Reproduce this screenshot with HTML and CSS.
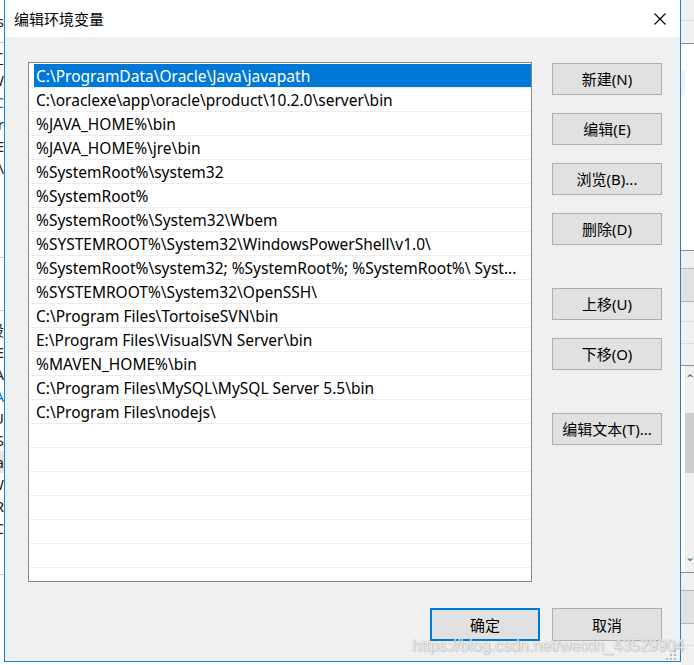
FILE: index.html
```html
<!DOCTYPE html>
<html lang="zh-CN">
<head>
    <meta charset="UTF-8">
    <meta name="viewport" content="width=device-width, initial-scale=1.0">
    <title>编辑环境变量</title>
    <link rel="stylesheet" href="styles.css">
</head>
<body>
    <div class="desktop">
        <!-- window behind, left edge -->
        <div class="bg-left">
            <div class="bl-top"><span class="frag">Settings</span></div>
            <div class="bl-lines">
                <span class="frag">工</span>
                <span class="frag">W</span>
                <span class="frag blue">C</span>
                <span class="frag">r</span>
                <span class="frag">E</span>
                <span class="frag">\</span>
            </div>
            <div class="bl-mid"></div>
            <div class="bl-lines bl-lower">
                <span class="frag">設</span>
                <span class="frag">E</span>
                <span class="frag">A</span>
                <span class="frag blue">A</span>
                <span class="frag">U</span>
                <span class="frag">S</span>
                <span class="frag shade">a</span>
                <span class="frag">W</span>
                <span class="frag">R</span>
                <span class="frag">C</span>
            </div>
        </div>

        <div class="dialog">
            <div class="titlebar">
                <span class="title">编辑环境变量</span>
                <svg class="close" width="12" height="12" viewBox="0 0 12 12">
                    <path d="M0.5 0.5 L11.5 11.5 M11.5 0.5 L0.5 11.5" stroke="#000" stroke-width="1.1" fill="none"/>
                </svg>
            </div>

            <div class="content">
                <div class="main">
                    <div class="list">
                        <div class="row selected"><span class="cell">C:\ProgramData\Oracle\Java\javapath</span></div>
                        <div class="row"><span class="cell">C:\oraclexe\app\oracle\product\10.2.0\server\bin</span></div>
                        <div class="row"><span class="cell">%JAVA_HOME%\bin</span></div>
                        <div class="row"><span class="cell">%JAVA_HOME%\jre\bin</span></div>
                        <div class="row"><span class="cell">%SystemRoot%\system32</span></div>
                        <div class="row"><span class="cell">%SystemRoot%</span></div>
                        <div class="row"><span class="cell">%SystemRoot%\System32\Wbem</span></div>
                        <div class="row"><span class="cell">%SYSTEMROOT%\System32\WindowsPowerShell\v1.0\</span></div>
                        <div class="row"><span class="cell">%SystemRoot%\system32; %SystemRoot%; %SystemRoot%\ Syst...</span></div>
                        <div class="row"><span class="cell">%SYSTEMROOT%\System32\OpenSSH\</span></div>
                        <div class="row"><span class="cell">C:\Program Files\TortoiseSVN\bin</span></div>
                        <div class="row"><span class="cell">E:\Program Files\VisualSVN Server\bin</span></div>
                        <div class="row"><span class="cell">%MAVEN_HOME%\bin</span></div>
                        <div class="row"><span class="cell">C:\Program Files\MySQL\MySQL Server 5.5\bin</span></div>
                        <div class="row"><span class="cell">C:\Program Files\nodejs\</span></div>
                        <div class="row"></div>
                        <div class="row"></div>
                        <div class="row"></div>
                        <div class="row"></div>
                        <div class="row"></div>
                        <div class="row"></div>
                        <div class="row"></div>
                    </div>

                    <div class="side">
                        <button class="btn">新建(N)</button>
                        <button class="btn">编辑(E)</button>
                        <button class="btn">浏览(B)...</button>
                        <button class="btn">删除(D)</button>
                        <button class="btn group">上移(U)</button>
                        <button class="btn">下移(O)</button>
                        <button class="btn group">编辑文本(T)...</button>
                    </div>
                </div>

                <div class="footer">
                    <button class="btn btn-default">确定</button>
                    <button class="btn">取消</button>
                </div>
            </div>

            <svg class="grip" width="10" height="10" viewBox="0 0 10 10">
                <rect x="8" y="0" width="2" height="2" fill="#b8b8b8"/>
                <rect x="4" y="4" width="2" height="2" fill="#b8b8b8"/>
                <rect x="8" y="4" width="2" height="2" fill="#b8b8b8"/>
                <rect x="0" y="8" width="2" height="2" fill="#b8b8b8"/>
                <rect x="4" y="8" width="2" height="2" fill="#b8b8b8"/>
                <rect x="8" y="8" width="2" height="2" fill="#b8b8b8"/>
            </svg>
        </div>

        <!-- window behind, right edge -->
        <div class="bg-right">
            <div class="rs rs-a"></div>
            <div class="rs rs-b"></div>
            <div class="rs rs-c"><div class="rs-patch"></div></div>
            <div class="rs rs-d"></div>
            <div class="rs rs-e"></div>
            <div class="rs rs-f"></div>
            <div class="rs rs-g"></div>
            <div class="rs rs-h"></div>
            <div class="rs rs-scroll">
                <div class="rs-gutter"></div>
                <div class="scrollbar">
                    <span class="arrow">&#8963;</span>
                    <div class="thumb"></div>
                    <span class="arrow down">&#8964;</span>
                </div>
            </div>
            <div class="rs rs-d"></div>
            <div class="rs rs-e"></div>
            <div class="rs rs-end"></div>
        </div>

        <div class="watermark">https://blog.csdn.net/weixin_43529904</div>
    </div>
</body>
</html>
```

FILE: styles.css
```css
body {
    margin: 0;
    padding: 0;
    font-family: "Noto Sans", "Noto Sans CJK SC", sans-serif;
    font-size: 15px;
    color: #000;
    background: #fff;
}

.desktop {
    display: flex;
    width: 694px;
    height: 665px;
    position: relative;
    overflow: hidden;
    background: #fff;
}

/* ---------- background windows ---------- */

.bg-left {
    width: 4px;
    flex-shrink: 0;
    overflow: hidden;
    background: #fff;
}

.bl-top {
    height: 42px;
    border-bottom: 1px solid #c8c8c8;
    display: flex;
    justify-content: flex-end;
    align-items: center;
}

.bl-lines {
    display: flex;
    flex-direction: column;
    align-items: flex-end;
    padding-top: 4px;
    height: 210px;
    border-bottom: 1px solid #c8c8c8;
}

.bl-mid {
    height: 52px;
    border-bottom: 1px solid #c8c8c8;
}

.bl-lower {
    height: 255px;
    padding-top: 8px;
}

.frag {
    display: block;
    line-height: 22px;
    font-size: 15px;
    color: #222;
    white-space: nowrap;
}

.frag.blue {
    color: #0078d7;
}

.frag.shade {
    background: #e5e5e5;
}

.bg-right {
    width: 13px;
    flex-shrink: 0;
    background: #f0f0f0;
}

.rs {
    background: #f0f0f0;
}

.rs-a { height: 20px; border-bottom: 1px solid #dadada; }
.rs-b { height: 22px; border-bottom: 1px solid #8f8f8f; }
.rs-c { height: 207px; box-sizing: border-box; padding-top: 26px; border-bottom: 1px solid #8f8f8f; background: #fff; }
.rs-d { height: 17px; border-bottom: 1px solid #b5b5b5; }
.rs-e { height: 32px; border-bottom: 1px solid #b5b5b5; background: #e1e1e1; }
.rs-f { height: 19px; border-bottom: 1px solid #dcdcdc; }
.rs-g { height: 21px; border-bottom: 1px solid #dcdcdc; }
.rs-h { height: 21px; border-bottom: 1px solid #8f8f8f; }
.rs-end { height: 21px; border-bottom: 1px solid #dcdcdc; }

.rs-patch {
    width: 4px;
    height: 25px;
    background: #f3f3f3;
}

.rs-scroll {
    height: 206px;
    border-bottom: 1px solid #8f8f8f;
    display: flex;
    background: #fff;
}

.rs-gutter {
    width: 4px;
    background: #fff;
}

.scrollbar {
    flex: 1;
    background: #f0f0f0;
    display: flex;
    flex-direction: column;
    align-items: center;
    overflow: hidden;
}

.arrow {
    font-size: 12px;
    line-height: 14px;
    height: 14px;
    margin-top: 6px;
    color: #606060;
}

.arrow.down {
    margin-top: auto;
    margin-bottom: 8px;
}

.thumb {
    width: 100%;
    height: 60px;
    margin-top: 27px;
    background: #cdcdcd;
}

/* ---------- dialog ---------- */

.dialog {
    width: 677px;
    height: 662px;
    flex-shrink: 0;
    box-sizing: border-box;
    border: 1px solid #1883d7;
    border-top: none;
    display: flex;
    flex-direction: column;
    position: relative;
}

.titlebar {
    height: 37px;
    background: #fff;
    display: flex;
    align-items: center;
    padding-left: 9px;
}

.title {
    font-family: "Noto Sans CJK SC", sans-serif;
    font-size: 15px;
    line-height: 20px;
    margin-top: 1px;
}

.close {
    margin-left: auto;
    margin-right: 14px;
}

.content {
    flex: 1;
    background: #f0f0f0;
    padding: 25px 18px 20px 23px;
}

.main {
    display: flex;
    gap: 20px;
}

.list {
    width: 504px;
    height: 520px;
    box-sizing: border-box;
    border: 1px solid #828790;
    background: #fff;
    padding: 1px 0 0 1px;
    overflow: hidden;
}

.row {
    height: 24px;
    box-sizing: border-box;
    border-bottom: 1px solid #ededed;
}

.cell {
    display: block;
    height: 23px;
    box-sizing: border-box;
    padding-top: 1px;
    line-height: 23px;
    padding-left: 6px;
    font-size: 15.5px;
    white-space: nowrap;
    overflow: hidden;
    text-overflow: ellipsis;
}

.row.selected .cell {
    margin-left: 4px;
    padding-left: 2px;
    background: #0078d7;
    color: #fff;
}

.side {
    display: flex;
    flex-direction: column;
    gap: 18px;
    padding-top: 1px;
}

.btn {
    width: 110px;
    height: 32px;
    box-sizing: border-box;
    border: 1px solid #adadad;
    background: #e1e1e1;
    font-family: "Noto Sans", "Noto Sans CJK SC", sans-serif;
    font-size: 15px;
    color: #000;
    padding: 0;
    line-height: 28px;
}

.btn.group {
    margin-top: 25px;
}

.footer {
    display: flex;
    justify-content: flex-end;
    gap: 12px;
    margin-top: 26px;
}

.footer .btn {
    height: 33px;
}

.btn-default {
    border: 2px solid #0078d7;
}

.grip {
    position: absolute;
    right: 4px;
    bottom: 1px;
}

.watermark {
    position: absolute;
    left: 412px;
    top: 637px;
    font-family: "Liberation Sans", sans-serif;
    font-size: 16px;
    color: rgba(255, 255, 255, 0.75);
    text-shadow: 0 0 1px rgba(120, 120, 120, 0.6), 1px 1px 1px rgba(150, 150, 150, 0.4);
    white-space: nowrap;
}
```
